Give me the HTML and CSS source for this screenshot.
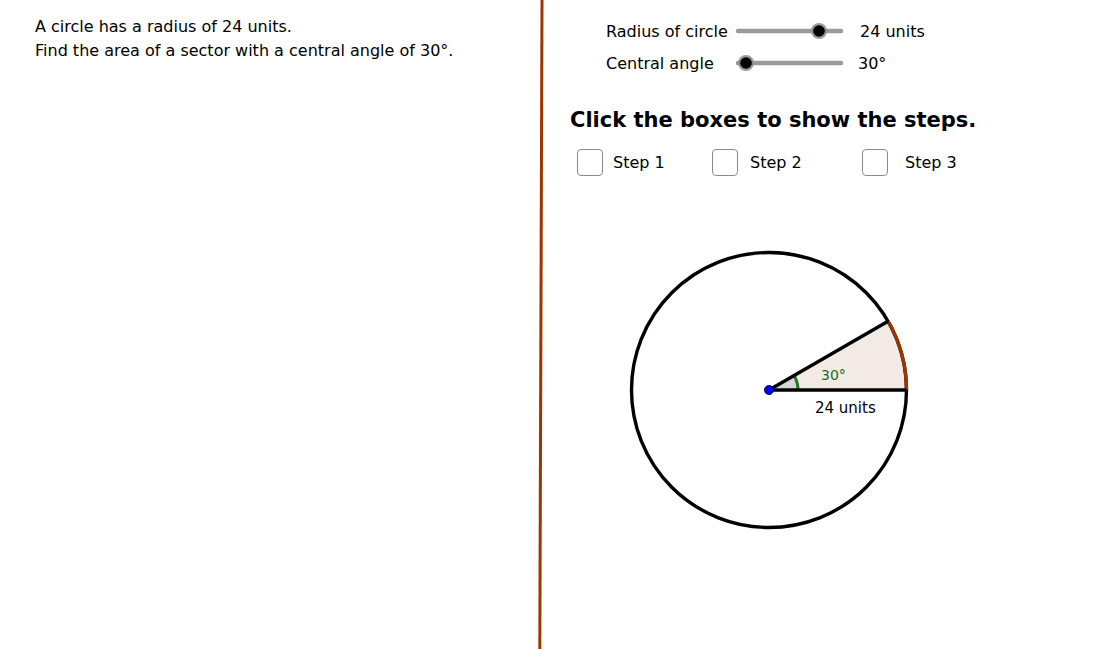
FILE: index.html
```html
<!DOCTYPE html>
<html>
<head>
<meta charset="utf-8">
<link rel="stylesheet" href="styles.css">
</head>
<body>
<div class="app">
  <div class="left">
    <p class="line">A circle has a radius of 24 units.</p>
    <p class="line">Find the area of a sector with a central angle of 30°.</p>
  </div>
  <svg class="divider" width="6" height="649" viewBox="0 0 6 649">
    <line x1="4" y1="0" x2="1.8" y2="649" stroke="#9e3500" stroke-width="3"/>
  </svg>
  <div class="right">
    <div class="sliders">
      <div class="srow">
        <span class="slabel">Radius of circle</span>
        <svg class="slider" width="107" height="20" viewBox="0 0 107 20">
          <line x1="2" y1="10" x2="105" y2="10" stroke="#9a9a9a" stroke-width="4.5" stroke-linecap="round"/>
          <circle cx="83" cy="10" r="8" fill="#8a8a8a" opacity="0.85"/>
          <circle cx="83" cy="10" r="5.8" fill="#000"/>
        </svg>
        <span class="svalue">24 units</span>
      </div>
      <div class="srow">
        <span class="slabel">Central angle</span>
        <svg class="slider" width="107" height="20" viewBox="0 0 107 20">
          <line x1="2" y1="10" x2="105" y2="10" stroke="#9a9a9a" stroke-width="4.5" stroke-linecap="round"/>
          <circle cx="10" cy="10" r="8" fill="#8a8a8a" opacity="0.85"/>
          <circle cx="10" cy="10" r="5.8" fill="#000"/>
        </svg>
        <span class="svalue deg">30°</span>
      </div>
    </div>
    <h1 class="heading">Click the boxes to show the steps.</h1>
    <div class="steps">
      <label class="step s1"><span class="box"></span><span class="stext">Step 1</span></label>
      <label class="step s2"><span class="box"></span><span class="stext">Step 2</span></label>
      <label class="step s3"><span class="box"></span><span class="stext">Step 3</span></label>
    </div>
    <svg class="graphic" width="556" height="449" viewBox="0 0 556 449">
      <path d="M225 190 L362.5 190 A137.5 137.5 0 0 0 344.08 121.25 Z" fill="#f3eae5"/>
      <path d="M225 190 L254 190 A29 29 0 0 0 250.11 175.5 Z" fill="#d6d6d6"/>
      <circle cx="225" cy="190" r="137.5" fill="none" stroke="#000" stroke-width="3.4"/>
      <path d="M362.5 190 A137.5 137.5 0 0 0 344.08 121.25" fill="none" stroke="#9e3500" stroke-width="3.4"/>
      <path d="M254 190 A29 29 0 0 0 250.11 175.5" fill="none" stroke="#1b7a1b" stroke-width="3"/>
      <line x1="225" y1="190" x2="362.5" y2="190" stroke="#000" stroke-width="3.4"/>
      <line x1="225" y1="190" x2="344.08" y2="121.25" stroke="#000" stroke-width="3.4"/>
      <circle cx="225" cy="190" r="4.6" fill="#0000ff" stroke="#000033" stroke-width="0.8"/>
      <text x="277" y="180" class="angtext">30°</text>
      <text x="271" y="213" class="lentext">24 units</text>
    </svg>
  </div>
</div>
</body>
</html>
```

FILE: styles.css
```css
html, body {
  margin: 0;
  padding: 0;
  background: #fff;
}
body {
  width: 1100px;
  height: 649px;
  overflow: hidden;
  font-family: "DejaVu Sans", "Liberation Sans", sans-serif;
  color: #000;
}
.app {
  display: flex;
  height: 649px;
}
.left {
  width: 538px;
  padding: 15px 0 0 35px;
  box-sizing: border-box;
}
.line {
  margin: 0;
  font-size: 16px;
  line-height: 24px;
}
.divider {
  display: block;
  flex: none;
}
.right {
  flex: 1;
  display: flex;
  flex-direction: column;
}
.sliders {
  padding: 15px 0 0 62px;
}
.srow {
  display: flex;
  align-items: center;
  height: 32px;
  font-size: 16px;
}
.slabel {
  width: 130px;
}
.slider {
  display: block;
}
.svalue {
  margin-left: 17px;
}
.svalue.deg {
  margin-left: 15px;
}
.heading {
  margin: 27px 0 0 26px;
  font-size: 21px;
  line-height: 28px;
  font-weight: bold;
}
.steps {
  display: flex;
  margin: 15px 0 0 33px;
  height: 26px;
}
.step {
  display: flex;
  align-items: center;
  font-size: 16px;
}
.box {
  width: 26px;
  height: 27px;
  border: 1.5px solid #8a8a8a;
  border-radius: 4px;
  box-sizing: border-box;
  background: #fff;
}
.s1 { width: 135px; }
.s2 { width: 150px; }
.s1 .box { margin-right: 10px; }
.s2 .box { margin-right: 12px; }
.s3 .box { margin-right: 17px; }
.graphic {
  display: block;
  margin-top: 25px;
}
.angtext {
  font-family: "DejaVu Sans", "Liberation Sans", sans-serif;
  font-size: 14px;
  fill: #1b6e1b;
}
.lentext {
  font-family: "DejaVu Sans", "Liberation Sans", sans-serif;
  font-size: 15px;
  fill: #000;
}
```
